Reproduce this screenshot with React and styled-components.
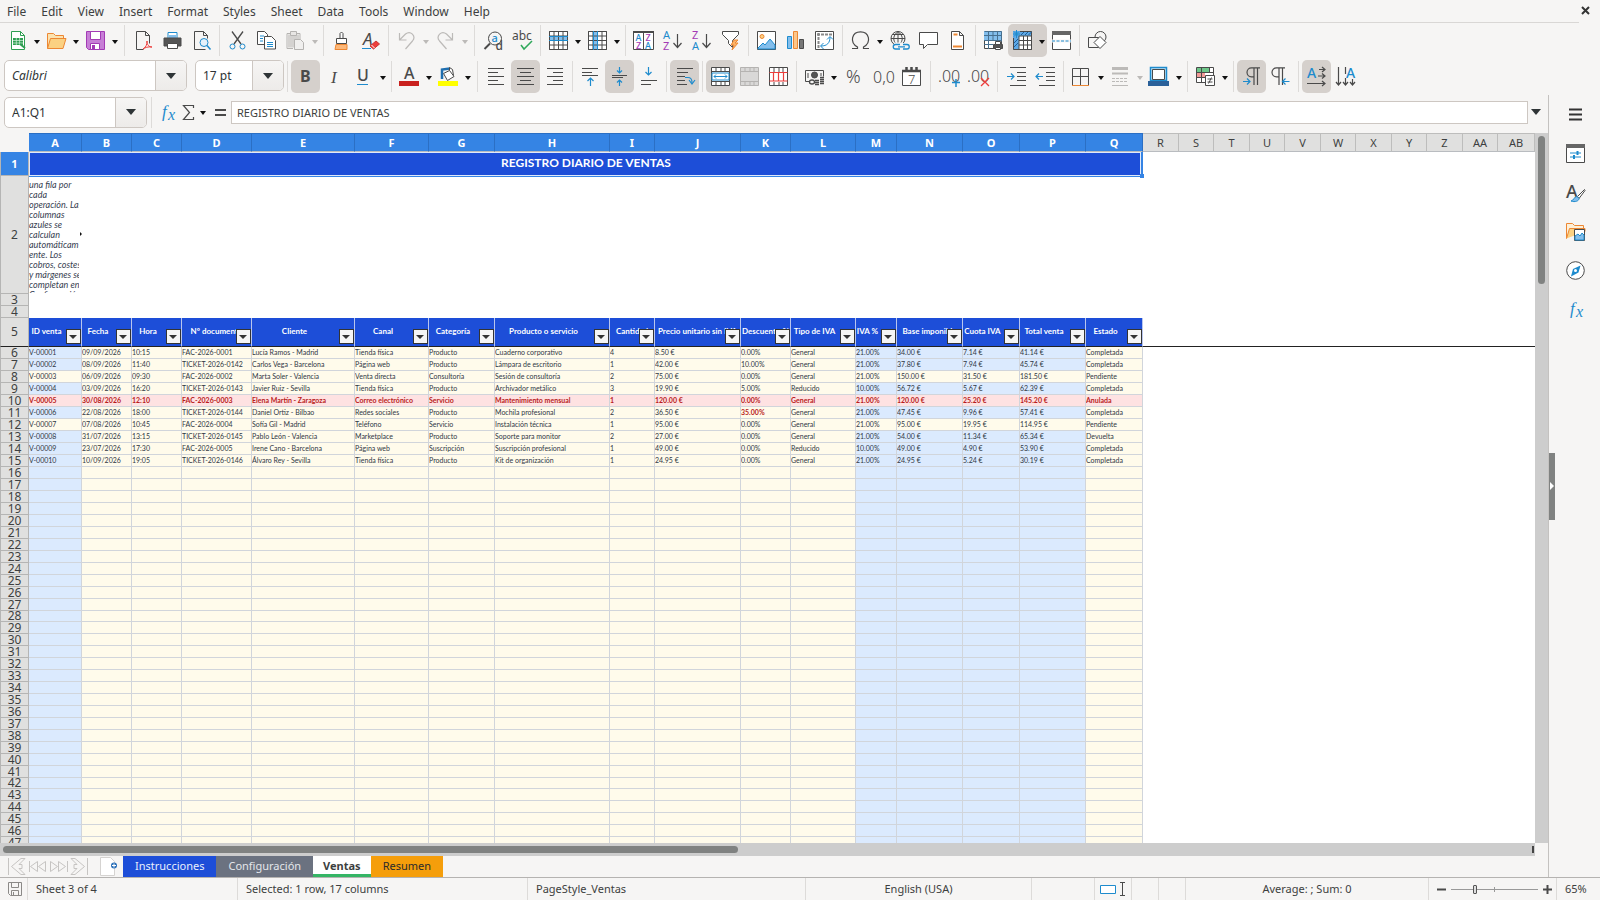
import React from 'react'
import styled, { createGlobalStyle, css } from 'styled-components'

const UI = '"Noto Sans", sans-serif'
const CELL = 'Lato, Carlito, sans-serif'
const INK = '#4a4a4a'
const BLUE = '#1e8bcd'
const SKY = '#83beec'
const ORANGE = '#ed8733'
const RED = '#ed3d3b'
const PURPLE = '#a33ab5'
const MUTED = '#bcbab8'

const GlobalStyle = createGlobalStyle`
    * { box-sizing: border-box; }
    body {
        margin: 0;
        background: #f6f5f4;
        color: #3d3f40;
        font-family: ${UI};
        font-size: 12px;
    }
    button, input, select {
        margin: 0;
        padding: 0;
        border: 0;
        border-radius: 0;
        background: none;
        color: inherit;
        font: inherit;
    }
    svg { overflow: visible; }
`

const Window = styled.div`
    display: flex;
    flex-direction: column;
    height: 100vh;
    overflow: hidden;
`

const MenuBar = styled.nav`
    display: flex;
    flex: none;
    height: 23px;
    align-items: center;
    justify-content: space-between;
    margin-right: 21px;
    border-bottom: 1px solid #d9d7d5;
`

const MenuItem = styled.button`
    height: 22px;
    padding: 0 8px 0 7px;
    line-height: 24px;
`

const CloseButton = styled.button`
    display: flex;
    flex: none;
    width: 12px;
    height: 12px;
    margin-right: -12px;
`

const Toolbar = styled.div`
    display: flex;
    flex: none;
    height: 36px;
    align-items: flex-start;
    padding: 1px 0 0 ${props => props.$indent}px;
`

const ToolButton = styled.button`
    display: flex;
    flex: none;
    height: 33px;
    align-items: center;
    border-radius: 5px;
    background: ${props => (props.$active ? '#d5d0cc' : 'transparent')};
`

const Glyph = styled.span`
    display: flex;
    width: 29px;
    justify-content: center;
`

const Caret = styled.span`
    width: 10px;
    display: flex;
    justify-content: center;
    padding-top: 2px;

    &::before {
        content: '';
        border: 3px solid transparent;
        border-top: 4px solid ${props => (props.$off ? MUTED : '#111')};
        border-bottom: 0;
    }
`

const Separator = styled.span`
    flex: none;
    width: 1px;
    height: 31px;
    margin: 1px ${props => (props.$wide ? 4 : 3)}px;
    background: #dddbd9;
`

const Combo = styled.span`
    display: grid;
    flex: none;
    width: ${props => props.$width}px;
    height: 31px;
    margin-right: ${props => props.$gap || 0}px;
    border: 1px solid #cdc7c2;
    border-radius: 5px;
    background: #fff;
    overflow: hidden;
`

const Select = styled.select`
    grid-area: 1 / 1;
    appearance: none;
    width: 100%;
    padding-left: 7px;
    font-style: ${props => (props.$italic ? 'italic' : 'normal')};
    color: #2e3436;
`

const ComboArrow = styled.span`
    grid-area: 1 / 1;
    justify-self: end;
    display: flex;
    width: 31px;
    align-items: center;
    justify-content: center;
    border-left: 1px solid #cdc7c2;
    background: linear-gradient(#f6f5f4, #edebe9);
    pointer-events: none;

    &::before {
        content: '';
        border: 5px solid transparent;
        border-top: 6px solid #2e3436;
        border-bottom: 0;
    }
`

const Body = styled.div`
    display: flex;
    flex: 1;
    min-height: 0;
`

const Main = styled.main`
    display: flex;
    flex: 1;
    min-width: 0;
    flex-direction: column;
`

const FormulaBar = styled.div`
    display: flex;
    flex: none;
    height: 38px;
    align-items: center;
    padding: 0 4px 4px;
`

const FormulaButton = styled.button`
    display: flex;
    flex: none;
    width: ${props => props.$width || 22}px;
    align-items: center;
    justify-content: center;
`

const FormulaInput = styled.input`
    flex: 1;
    min-width: 0;
    height: 23px;
    padding: 0 5px;
    border: 1px solid #cdc7c2;
    background: #fff;
    font-size: 11px;
`

const ExpandButton = styled.button`
    flex: none;
    width: 16px;
    padding-left: 3px;

    &::before {
        content: '';
        display: block;
        width: 0;
        border: 5px solid transparent;
        border-top: 6px solid #2e3436;
        border-bottom: 0;
    }
`

const GridArea = styled.div`
    display: flex;
    flex: 1;
    min-height: 0;
`

const GridView = styled.div`
    flex: 1;
    min-width: 0;
    overflow: hidden;
    background: #fff;
`

const Sheet = styled.table`
    width: 100%;
    min-width: 1534px;
    table-layout: fixed;
    border-collapse: separate;
    border-spacing: 0;
    font-family: ${CELL};
    font-size: 7px;
    line-height: 11px;

    th, td { padding: 0; }
`

const Corner = styled.td`
    background: #f6f5f4;
`

const ColumnHead = styled.th`
    height: 19px;
    border: solid ${props => (props.$selected ? '#2b6fc4' : '#bdbdbc')};
    border-width: 1px 1px 1px 0;
    border-bottom-color: #b9bcc0;
    background: ${props => (props.$selected ? '#3584e4' : '#e0e0df')};
    color: ${props => (props.$selected ? '#fff' : '#3d3f40')};
    font: ${props => (props.$selected ? 700 : 400)} 11px/17px ${UI};
`

const RowHead = styled.th`
    height: ${props => props.$height}px;
    border: solid #b5b5b4;
    border-width: 0 1px 1px;
    background: ${props => (props.$selected ? '#3584e4' : '#e0e0df')};
    color: ${props => (props.$selected ? '#fff' : '#3d3f40')};
    font: ${props => (props.$selected ? 700 : 400)} ${props => (props.$selected ? 11 : 12)}px/10px ${UI};
    ${props => props.$frozen && css`border-bottom-color: #222;`}
`

const TitleCell = styled.td`
    position: relative;
    padding-bottom: 3px !important;
    background: #1d4ed8;
    color: #fff;
    font-size: 12px;
    font-weight: 700;
    text-align: center;
`

const SelectionFrame = styled.span`
    position: absolute;
    inset: 0 0 -1px 0;
    border: solid #3584e4;
    border-width: 0 2px 1px 0;
    box-shadow: inset 0 0 0 1px #dfe9fb;

    &::after {
        content: '';
        position: absolute;
        right: -3px;
        bottom: -2px;
        width: 4px;
        height: 4px;
        background: #3584e4;
    }
`

const NoteCell = styled.td`
    position: relative;
    vertical-align: top;

    &::after {
        content: '';
        position: absolute;
        right: 0;
        top: 56px;
        border: 2px solid transparent;
        border-left: 2px solid #111;
        border-right: 0;
    }
`

const NoteText = styled.div`
    width: 50px;
    height: 117px;
    padding-top: 4px;
    overflow: hidden;
    color: #374151;
    font-size: 9px;
    font-style: italic;
    line-height: 10px;
    white-space: nowrap;
`

const FieldCell = styled.th`
    position: relative;
    padding: 0 ${props => (props.$full ? 0 : 17)}px 1px 0 !important;
    border-right: 1px solid #b9c6ee;
    border-bottom: 1px solid #222;
    background: #1d4ed8;
    color: #fff;
    font-size: 8px;
    font-weight: 700;
    white-space: nowrap;
`

const FieldName = styled.div`
    display: flex;
    justify-content: center;
    overflow: hidden;
`

const FilterButton = styled.button`
    position: absolute;
    right: 0;
    bottom: 2px;
    width: 15px;
    height: 15px;
    padding: 1px 2px 0;
    border: 1px solid #333;
    background: #f5f5f5;

    &::before {
        content: '';
        display: block;
        width: 0;
        border: 4px solid transparent;
        border-top: 4px solid #333;
        border-bottom: 0;
    }
`

const fills = { cream: '#fffbeb', blue: '#dbeafe', red: '#fee2e2' }

const Cell = styled.td`
    border: solid #d1d5db;
    border-width: 0 1px 1px 0;
    background: ${props => fills[props.$fill]};
    color: ${props => (props.$alert ? '#b91c1c' : '#2f3744')};
    font-weight: ${props => (props.$alert ? 700 : 400)};
    white-space: nowrap;
    overflow: hidden;
`

const FrozenEdge = styled.td`
    border-bottom: 1px solid #222;
`

const VScroll = styled.div`
    flex: none;
    width: 13px;
    padding: 3px;
    background: #cdcdcd;
`

const VThumb = styled.div`
    width: 7px;
    height: 21%;
    border-radius: 4px;
    background: #808281;
`

const HScroll = styled.div`
    display: flex;
    flex: none;
    justify-content: space-between;
    height: 13px;
    margin-right: 13px;
    padding: 3px 1px 3px 3px;
    background: #cdcdcd;
`

const HThumb = styled.div`
    width: 48%;
    border-radius: 4px;
    background: #808281;
`

const SplitMark = styled.div`
    width: 2px;
    background: #444;
`

const TabBar = styled.div`
    display: flex;
    flex: none;
    height: 21px;
    padding-left: 7px;
`

const TabNav = styled.button`
    display: flex;
    width: 21px;
`

const AddTab = styled.button`
    display: flex;
    width: 20px;
    margin: 0 4px 0 8px;
`

const tabKinds = {
    blue: css`background: #1d4ed8; color: #e8eefc;`,
    gray: css`background: #6b7280; color: #e4e6ea;`,
    open: css`background: #fff; box-shadow: inset 0 -3px #35b565; font-weight: 700;`,
    amber: css`background: #f59e0b; color: #2b2b2b;`,
}

const Tab = styled.button`
    padding: 0 ${props => (props.$kind === 'open' ? 10 : 12)}px 2px;
    font-size: 11px;
    ${props => tabKinds[props.$kind]}
`

const Rail = styled.aside`
    display: flex;
    flex: none;
    width: 52px;
    border-left: 1px solid #c4c2c0;
    padding-right: 4px;
`

const RailHandle = styled.button`
    display: flex;
    width: 6px;
    height: 67px;
    align-self: center;
    align-items: center;
    background: #808281;

    &::before {
        content: '';
        margin-left: 1px;
        border: 4px solid transparent;
        border-left: 4px solid #fff;
        border-right: 0;
    }
`

const RailButtons = styled.div`
    display: flex;
    flex: 1;
    flex-direction: column;
`

const RailButton = styled.button`
    display: flex;
    height: 39px;
    align-items: center;
    justify-content: center;
`

const StatusBar = styled.footer`
    display: flex;
    flex: none;
    height: 23px;
    border-top: 1px solid #b5b3b1;
    font-size: 11px;
    line-height: 22px;
`

const StatusItem = styled.div`
    display: flex;
    flex: ${props => (props.$grow ? `${props.$grow} 1 0` : 'none')};
    width: ${props => (props.$width ? `${props.$width}px` : 'auto')};
    align-items: center;
    justify-content: ${props => (props.$center ? 'center' : 'flex-start')};
    gap: 5px;
    padding-left: ${props => (props.$center ? 0 : 8)}px;
    white-space: nowrap;

    & + & {
        border-left: 1px solid #dddbd9;
    }
`

const ZoomButton = styled.button`
    display: flex;
    width: 9px;
`

const ZoomSlider = styled.input`
    appearance: none;
    width: 87px;
    height: 11px;
    background:
        linear-gradient(#999, #999) 43px 3px / 1px 5px no-repeat,
        linear-gradient(#999, #999) 0 5px / 100% 1px no-repeat;

    &::-webkit-slider-thumb {
        appearance: none;
        width: 4px;
        height: 9px;
        border: 1px solid #555;
        border-radius: 1px;
        background: #ddd;
    }
`

const Svg = ({ size = 19, w, h, children }) => (
    <svg
        width={w || size}
        height={h || size}
        viewBox={`0 0 ${w || size} ${h || size}`}
        fill="none"
        stroke={INK}
        strokeWidth="1"
        aria-hidden="true"
    >
        {children}
    </svg>
)

const Letter = ({ x, y, s = 12, c = INK, w = 400, i, f = UI, children }) => (
    <text x={x} y={y} fontSize={s} fill={c} stroke="none" fontWeight={w} fontStyle={i ? 'italic' : 'normal'} fontFamily={f}>
        {children}
    </text>
)

const grid = 'M.5.5h18v18H.5zM.5 5h18M.5 9.5h18M.5 14h18M5 .5v18M9.5.5v18M14 .5v18'

const icons = {
    new: (
        <>
            <path d="M3.5.5h9l4 4v14h-13z" fill="#fff" stroke="#2f9e52" />
            <path d="M12.5.5v4h4" stroke="#2f9e52" />
            <path d="M5 7h10v7H5z" fill="#2f9e52" stroke="none" />
            <path d="M5 9.5h10M5 12h10M8.3 7v7M11.6 7v7" stroke="#d5f0dc" strokeWidth=".7" />
            <path d="M12 13l5 4" stroke="#2f9e52" strokeWidth="2" />
        </>
    ),
    open: (
        <>
            <path d="M.5 17.5v-15h6l2 2h8v3" fill="#fbe3b0" stroke={ORANGE} />
            <path d="M.5 17.5l3-10h15.500l-3 10z" fill="#fbd182" stroke={ORANGE} />
        </>
    ),
    save: (
        <>
            <path d="M.5.5h18v18h-16l-2-2z" fill="#c77fd6" stroke={PURPLE} />
            <path d="M4.500.500h10v8h-10z" fill="#fff" stroke={PURPLE} />
            <path d="M4.500 12.500h9v6h-9z" fill="#fff" stroke={PURPLE} />
            <path d="M6 14h3v4H6z" fill={PURPLE} stroke="none" />
        </>
    ),
    pdf: (
        <>
            <path d="M2.500 18.500V.500h9l4 4v8M2.500 18.500h7M11.500.500v4h4" />
            <path d="M9 18c3-2 4-4 4-8 0 4 2 6 5 6-4-.5-7 .5-9 2z" stroke={RED} />
        </>
    ),
    print: (
        <>
            <path d="M5 8V1.500h9V8" fill="#fff" stroke={BLUE} />
            <path d="M6 7h7V4H6z" fill={SKY} stroke="none" />
            <path d="M1 7h17v8H1z" fill="#555" />
            <path d="M4.500 12.500h10v5h-10z" fill="#fff" />
        </>
    ),
    preview: (
        <>
            <path d="M2.500 18.500V.500h9l4 4v3M2.500 18.500h11M11.500.500v4h4" />
            <circle cx="12" cy="11.500" r="4" fill="#e6f2fb" stroke={BLUE} />
            <path d="M15 14.500l3.500 4" stroke={BLUE} strokeWidth="1.500" />
        </>
    ),
    cut: (
        <>
            <path d="M4 .500L13 13M15 .500L6 13" strokeWidth="1.300" />
            <circle cx="4.500" cy="15.500" r="2.500" stroke={BLUE} />
            <circle cx="14.500" cy="15.500" r="2.500" stroke={BLUE} />
        </>
    ),
    copy: (
        <>
            <path d="M.500.500h7l3 3v10H.500z" fill="#fff" />
            <path d="M7.500 5.500h7l4 4v8.500h-11z" fill="#fff" />
            <path d="M3 5h4M3 7.500h3M3 10h3M10 11.500h6M10 13.500h6M10 15.500h6" stroke={BLUE} />
        </>
    ),
    paste: (
        <>
            <path d="M1 2.500h13v6M1 2.500v15h6" stroke="#b5b3b1" />
            <path d="M2 3.500h11v13H2z" fill="#d4d2d0" stroke="none" />
            <path d="M4.500.500h6v4h-6z" fill="#e8e6e4" stroke="#b5b3b1" />
            <path d="M8.500 8.500h6l3 3v7h-9z" fill="#f0efee" stroke="#b5b3b1" />
        </>
    ),
    clone: (
        <>
            <path d="M8 7V2.500q1.500-3 3 0V7" fill="#fff" />
            <path d="M4.500 7.500h10v5h-10z" fill="#fff" />
            <path d="M4 13.500h11v5H3z" fill="#fcb87a" stroke={ORANGE} />
        </>
    ),
    clear: (
        <>
            <Letter x="2" y="14" s={17} i>A</Letter>
            <path d="M1 17.500h9" stroke={BLUE} />
            <path d="M9 15l6-5 3.500 3-6 5z" fill={RED} stroke="#c33" />
            <path d="M10.500 14l3 3" stroke="#fff" />
        </>
    ),
    undo: <path d="M2.500 2v7h7M2.500 9l6-6c5-4 11 2 7 7l-7 8" stroke={MUTED} strokeWidth="1.200" />,
    redo: <path d="M16.500 2v7h-7M16.500 9l-6-6c-5-4-11 2-7 7l7 8" stroke={MUTED} strokeWidth="1.200" />,
    find: (
        <>
            <circle cx="11" cy="7.500" r="6.500" />
            <path d="M6 12.500L.500 18" strokeWidth="2" />
            <Letter x="7.500" y="11" s={11} c={BLUE} w={500}>a</Letter>
            <Letter x="11.500" y="19" s={12} w={500}>d</Letter>
        </>
    ),
    spell: (
        <>
            <Letter x="-1" y="9" s={12}>abc</Letter>
            <path d="M8 14l3 4 8-8" stroke="#2fa85a" strokeWidth="1.500" />
        </>
    ),
    row: (
        <>
            <path d="M.500.500h18v18H.500z" fill="#fff" />
            <path d="M0 5h19v5H0z" fill={SKY} stroke="none" />
            <path d={grid} />
            <path d="M0 5.500h19M0 9.500h19" stroke={BLUE} />
        </>
    ),
    col: (
        <>
            <path d="M.500.500h18v18H.500z" fill="#fff" />
            <path d="M5 0h5v19H5z" fill={SKY} stroke="none" />
            <path d={grid} />
            <path d="M5.500 0v19M9.500 0v19" stroke={BLUE} />
        </>
    ),
    sort: (
        <>
            <path d="M-.500.500h20v18h-20zM9.500 2v16" fill="#fff" />
            <path d="M-1 1h21" strokeWidth="2" />
            <Letter x="1.500" y="10" s={9} c={BLUE} w={500}>A</Letter>
            <Letter x="2" y="18" s={9} c={PURPLE} w={500}>Z</Letter>
            <Letter x="11.500" y="10" s={9} c={PURPLE} w={500}>Z</Letter>
            <Letter x="11" y="18" s={9} c={BLUE} w={500}>A</Letter>
        </>
    ),
    az: (
        <>
            <Letter x="0" y="8" s={11} c={BLUE}>A</Letter>
            <Letter x="0" y="19" s={11} c={PURPLE}>Z</Letter>
            <path d="M14.500 3v13M10.500 12l4 4.500 4-4.500" strokeWidth="1.200" />
        </>
    ),
    za: (
        <>
            <Letter x="0" y="8" s={11} c={PURPLE}>Z</Letter>
            <Letter x="0" y="19" s={11} c={BLUE}>A</Letter>
            <path d="M14.500 3v13M10.500 12l4 4.500 4-4.500" strokeWidth="1.200" />
        </>
    ),
    filter: (
        <>
            <path d="M1.500.500h16v3l-6 6v7l-4-4v-3l-6-6z" fill="#fff" />
            <path d="M13 9l-3 5h3l-2 5 6-7h-3l3-3z" fill="#fcb468" stroke={ORANGE} />
        </>
    ),
    image: (
        <>
            <path d="M.500.500h18v18H.500z" fill="#fff" />
            <circle cx="5" cy="5.500" r="2" fill="#fcd182" stroke={ORANGE} />
            <path d="M1 17l5-5 2 2 5-6 5 6v4H1z" fill={SKY} stroke={BLUE} />
        </>
    ),
    chart: (
        <>
            <path d="M1.500 5.500h4v12h-4z" fill={SKY} stroke={BLUE} />
            <path d="M7.500.500h4v17h-4z" fill="#fcc68a" stroke={ORANGE} />
            <path d="M13.500 8.500h4v9h-4z" fill="#777" />
        </>
    ),
    pivot: (
        <>
            <path d="M.500.500h18v18H.500z" fill="#fff" />
            <path d="M2 3.500h15M3.500 2v15" strokeWidth="2" stroke="#888" strokeDasharray="3 1" />
            <path d="M6 15c6 0 9-3 9-9M12 8.500l3-3 3 3M8.500 12l-3 3 3 3" stroke={BLUE} />
        </>
    ),
    omega: <path d="M1 17.500h5.500v-1.500C-2 11 1 .800 9.500.800S21 11 12.500 16v1.500H18" strokeWidth="1.200" />,
    link: (
        <>
            <circle cx="8" cy="7.500" r="7" />
            <path d="M1 7.500h14M2.500 3.500h11M8 .500v11M8 .500c-5 4-5 8-3 11M8 .500c5 4 5 8 3 11" />
            <path d="M4 12h16v7H4z" fill="#f6f5f4" stroke="none" />
            <path d="M10 13.500H5.500a2 2 0 000 4.500H10M13 13.500h4a2 2 0 010 4.500h-4M8 15.800h7" stroke={BLUE} strokeWidth="1.300" />
        </>
    ),
    comment: <path d="M.500 1.500h18v12h-10l-4 4v-4h-4z" fill="#fff" />,
    header: (
        <>
            <path d="M3.500.500h8l4 4v14h-12zM11.500.500v4h4" fill="#fff" />
            <path d="M5.500 3.500h4M5 15.500h9" stroke={ORANGE} strokeWidth="2" />
        </>
    ),
    printArea: (
        <>
            <path d="M.500.500h17v17H.500z" fill="#fff" />
            <path d="M0 0h18v9H0z" fill={SKY} stroke="none" />
            <path d="M0 4.500h18M0 9.500h18M0 13.500h9M4.500 0v18M9 0v10M13.500 0v10M.500.500h17v10" stroke="#48708f" />
            <path d="M9.500 13.500h9v4h-9z" fill="#555" />
            <path d="M11.500 10.500h5v3h-5zM11.500 16.500h5v2h-5z" fill="#fff" />
        </>
    ),
    freeze: (
        <>
            <path d="M.500.500h18v18H.500z" fill="#fff" />
            <path d="M0 0h19v5H0zM0 0h6v19H0z" fill="#5fa9e6" stroke="none" />
            <path d="M.500 7v11.500h18V.500H7M6 5v13.500M6 5h12.500M6 9.500h12.500M6 14h12.500M10.500 5v13.500M14.500 5v13.500" />
            <path d="M8 4l3-3M12 4l3-3M15.500 4l3-3M1 12l4-4M1 16l4-4" stroke="#1f5f98" />
            <path d="M3.500-1v8M0 3h7M1 .500l5 5M6 .500l-5 5" stroke={BLUE} />
        </>
    ),
    split: (
        <>
            <path d="M.500.500h18v18H.500z" fill="#fff" />
            <path d="M0 0h19v4H0z" fill="#666" stroke="none" />
            <path d="M0 10h19" stroke="#f6f5f4" strokeWidth="3" />
            <path d="M0 10h19" stroke={BLUE} strokeDasharray="3 1.500" />
        </>
    ),
    shapes: (
        <>
            <circle cx="12.500" cy="6" r="5.500" />
            <path d="M.500 6.500h10v10H.500z" fill="#f6f5f4" />
            <path d="M12 5.500l6 6-6 6-6-6z" fill="#fff" />
        </>
    ),
    bold: <Letter x="4" y="15" s={16} w={700}>B</Letter>,
    italic: <Letter x="6" y="16" s={17} i f='"Liberation Serif", serif'>I</Letter>,
    underline: (
        <>
            <Letter x="3" y="14" s={16} w={500}>U</Letter>
            <path d="M3 17.500h11" stroke={BLUE} />
        </>
    ),
    fontColor: (
        <>
            <Letter x="4" y="12" s={16} w={500}>A</Letter>
            <path d="M-1 16.500h20" stroke="#c9211e" strokeWidth="5" />
        </>
    ),
    fill: (
        <>
            <path d="M3 12V2.500l8-1" stroke="#1f6fb0" strokeWidth="2.500" />
            <path d="M4.500 6.500l6-3 4.500 6-6.500 4zM10.500 3.500v-3l3 2 1 6" fill="#fff" />
            <path d="M-1 16.500h20" stroke="#ff0" strokeWidth="5" />
        </>
    ),
    left: <path d="M1 1.500h16M1 5.500h10M1 9.500h16M1 13.500h10M1 17.500h16" strokeWidth="1.200" />,
    center: <path d="M1 1.500h17M4 5.500h11M1 9.500h17M4 13.500h11M1 17.500h17" strokeWidth="1.200" />,
    right: <path d="M2 1.500h16M8 5.500h10M2 9.500h16M8 13.500h10M2 17.500h16" strokeWidth="1.200" />,
    top: (
        <>
            <path d="M1 1.500h16M1 5.500h10M1 8.500h16" />
            <path d="M9.500 19v-8M6.500 14l3-3 3 3" stroke={BLUE} strokeWidth="1.200" />
        </>
    ),
    middle: (
        <>
            <path d="M2 8.500h15M2 10.500h11" />
            <path d="M9.500 0v6M7 3.500l2.500 2.500L12 3.500M9.500 19v-6M7 15.500l2.500-2.500 2.500 2.500" stroke={BLUE} strokeWidth="1.200" />
        </>
    ),
    bottom: (
        <>
            <path d="M2 13.500h16M2 17.500h10" />
            <path d="M9.500 0v8M6.500 5l3 3 3-3" stroke={BLUE} strokeWidth="1.200" />
        </>
    ),
    wrap: (
        <>
            <path d="M2 1.500h16M2 5.500h11M2 9.500h8M2 13.500h8M2 17.500h10" />
            <path d="M10 10.500h3q4 0 4 5M14 13l3 4 3-4" stroke={BLUE} strokeWidth="1.200" />
        </>
    ),
    merge: (
        <>
            <path d="M.500.500h18v18H.500z" fill="#fff" />
            <path d="M0 4.500h19M0 14.500h19M5 0v5M10 0v5M14 0v5M5 15v4M10 15v4M14 15v4" />
            <path d="M1 6h17v7H1z" fill="#fff" stroke={BLUE} />
            <path d="M3 9.500h13M5 7.500l-2 2 2 2M14 7.500l2 2-2 2" stroke={BLUE} />
        </>
    ),
    mergeOff: (
        <>
            <path d="M.500.500h18v18H.500z" fill="#d9d8d7" stroke="#b5b3b1" />
            <path d="M0 4.500h19M0 14.500h19M5 0v5M10 0v5M14 0v5M5 15v4M10 15v4M14 15v4" stroke="#b5b3b1" />
        </>
    ),
    unmerge: (
        <>
            <path d="M.500.500h18v18H.500z" fill="#fff" />
            <path d="M5 0v5M10 0v5M14 0v5M5 15v4M10 15v4M14 15v4M.500 4v11M18.500 4v11" />
            <path d="M.500 5.500h18M.500 14h18M4.500 6v8M9.500 6v8M14.500 6v8" stroke={RED} strokeWidth="1.200" />
        </>
    ),
    currency: (
        <>
            <path d="M5 14.500H.500v-11h18v6" />
            <circle cx="9.500" cy="8" r="3" fill="#555" />
            <path d="M3 6v5M16 6v3" />
            <path d="M4.500 15a2.500 2 0 015 0 2.500 2 0 01-5 0zM10 13.500h4M10 15.500h4M10 17.500h4M15 10.500h4M15 12.500h4M15 14.500h4M15 16.500h4" strokeWidth="1.300" />
        </>
    ),
    percent: <Letter x="2" y="16" s={18} w={300}>%</Letter>,
    number: <Letter x="0" y="16" s={16} w={300}>0,0</Letter>,
    date: (
        <>
            <path d="M.500 3.500h18v15H.500z" fill="#fff" />
            <path d="M0 4h19M4.500 0v5M9.500 0v5M14.500 0v5" strokeWidth="2.500" />
            <Letter x="6" y="17" s={13} w={300}>7</Letter>
        </>
    ),
    addDec: (
        <>
            <Letter x="-2" y="15" s={16} w={300}>.00</Letter>
            <path d="M16 12v8M12 15.500h8" stroke={BLUE} strokeWidth="1.500" />
        </>
    ),
    delDec: (
        <>
            <Letter x="-2" y="15" s={16} w={300}>.00</Letter>
            <path d="M12 11l8 8M20 11l-8 8" stroke={RED} strokeWidth="1.300" />
        </>
    ),
    indent: (
        <>
            <path d="M3 .500h16M10 5.500h9M10 9.500h9M10 13.500h9M3 18.500h16" />
            <path d="M0 9.500h7M4 6.500l3 3-3 3" stroke={BLUE} strokeWidth="1.200" />
        </>
    ),
    outdent: (
        <>
            <path d="M3 .500h16M10 5.500h9M10 9.500h9M10 13.500h9M3 18.500h16" />
            <path d="M0 9.500h7M3 6.500l-3 3 3 3" stroke={BLUE} strokeWidth="1.200" />
        </>
    ),
    borders: (
        <>
            <path d="M.500 18V1.500h16V18M8.500 2v16M1 9.500h15" />
            <path d="M0 18.500h17" stroke={ORANGE} />
        </>
    ),
    lineStyle: (
        <>
            <path d="M1 1.500h16" stroke={MUTED} strokeWidth="3" />
            <path d="M1 6.500h16" stroke={MUTED} strokeWidth="2" />
            <path d="M1 11.500h16M1 14.500h16" stroke={MUTED} strokeDasharray="3 1" />
            <path d="M1 18.500h16" stroke={MUTED} />
        </>
    ),
    lineColor: (
        <>
            <path d="M.500.500h16v13h-16z" fill="#bfe0f5" stroke={BLUE} strokeWidth="1.500" />
            <path d="M2.500 2.500h12v10h-12z" fill="#fff" />
            <path d="M-2 16.500h21" stroke="#2a6099" strokeWidth="5" />
        </>
    ),
    conditional: (
        <>
            <path d="M.500.500h17v15H.500z" fill="#fff" />
            <path d="M1 1h12v4H1z" fill="#6dc789" stroke="none" />
            <path d="M1 5h8v6H1z" fill="#f29b98" stroke="none" />
            <path d="M0 5.500h17M0 10.500h9M5.500 0v15M13.500 0v6" />
            <path d="M9.500 8.500h9v10h-9z" fill="#fff" />
            <path d="M11.500 12h5M11.500 15h5M15.500 10.500l-3 6" />
        </>
    ),
    ltr: (
        <>
            <path d="M18 .800H9.500a4.500 4.500 0 000 9H12M12 .800V18M15.500.800V18" strokeWidth="1.200" />
            <path d="M1 14.500h7M5 11.500l3 3-3 3" stroke={BLUE} strokeWidth="1.200" />
        </>
    ),
    rtl: (
        <>
            <path d="M14 .800H5.500a4.500 4.500 0 000 9H8M8 .800V18M11.500.800V18" strokeWidth="1.200" />
            <path d="M18.500 14.500h-7M14.500 11.500l-3 3 3 3" stroke={BLUE} strokeWidth="1.200" />
        </>
    ),
    horizontal: (
        <>
            <Letter x="0" y="11" s={14} c={BLUE} w={500}>A</Letter>
            <path d="M12 2.500h6M15 0l3 2.500L15 5M11 9h7M15 6.500L18 9l-3 2.500M0 16.500h18M15 14l3 2.500-3 2.500" strokeWidth="1.200" />
        </>
    ),
    vertical: (
        <>
            <Letter x="10" y="11" s={14} c={BLUE} w={500}>A</Letter>
            <path d="M2.500 0v18M0 15l2.500 3L5 15M9.500 0v7M9.500 11v7M7 15l2.500 3 2.500-3M16.500 12v6M14 15l2.500 3 2.500-3" strokeWidth="1.200" />
        </>
    ),
    fx: (
        <>
            <Letter x="4" y="14" s={17} i c={BLUE} f='"Liberation Serif", serif'>f</Letter>
            <Letter x="10" y="17" s={16} i c={BLUE} f='"Liberation Serif", serif'>x</Letter>
        </>
    ),
    sum: <path d="M14.500 5V2.500h-10l6 7-6 7h10V14" strokeWidth="1.200" />,
    equals: <path d="M4 7h11M4 12h11" strokeWidth="2" />,
    menu: <path d="M3 4.500h13M3 9.500h13M3 14.500h13" stroke="#333" strokeWidth="2" />,
    properties: (
        <>
            <path d="M.500.500h18v18H.500z" fill="#fff" />
            <path d="M0 0h19v4H0z" fill="#666" stroke="none" />
            <path d="M4 9h11M4 13h11" stroke={BLUE} />
            <path d="M11.500 7v4M8 11v4" stroke={BLUE} strokeWidth="2" />
        </>
    ),
    styles: (
        <>
            <Letter x="0" y="15" s={18} w={500}>A</Letter>
            <path d="M18.500 6.500l-7 7 1.500 2 6-8z" fill="#fff" />
            <path d="M11 13.500c-3 0-3 4-6 4.500 4 1.500 8 0 8-2.500z" fill={SKY} stroke={BLUE} />
        </>
    ),
    gallery: (
        <>
            <path d="M.500 16.500V1.500h6l2 2h9v3" fill="#fdf0d8" stroke={ORANGE} />
            <path d="M.500 16.500l3-10h15.500v3" fill="#fbd182" stroke={ORANGE} />
            <path d="M8.500 7.500h10v11h-10z" fill="#fff" />
            <path d="M9 18v-4l3-2 2 2 2-3 2 2v5z" fill={SKY} stroke={BLUE} />
        </>
    ),
    navigator: (
        <>
            <circle cx="9.500" cy="9.500" r="8.800" fill="#fff" />
            <path d="M14.500 4.500l-2 7-7.500 4 2-7.500z" fill={BLUE} stroke="none" />
            <circle cx="9.500" cy="9.500" r="1.500" fill="#fff" stroke="none" />
        </>
    ),
}

const Tool = ({ name, caret, active, off }) => (
    <ToolButton type="button" aria-label={name} $active={active}>
        <Glyph><Svg>{icons[name]}</Svg></Glyph>
        {caret && <Caret $off={off} />}
    </ToolButton>
)

// "|" is a separator, "||" a wide one, "+" marks a drop-down, "*" a pressed button, "-" a greyed arrow
const renderTools = list => list.split(' ').map((item, i) => {
    if (item[0] === '|') return <Separator key={i} $wide={item === '||'} />
    const name = item.replace(/[^a-zA-Z]/g, '')
    return <Tool key={i} name={name} caret={item.includes('+')} active={item.includes('*')} off={item.includes('-')} />
})

const standardTools = 'new+ open+ save+ || pdf print preview | cut copy paste+- | clone clear | undo+- redo+- || find spell | row+ col+ | sort az za filter | image chart pivot | omega+ link comment header | printArea freeze+* split | shapes'
const formatTools = 'bold* italic underline+ | fontColor+ fill+ || left center* right | top middle* bottom | wrap* | merge* mergeOff unmerge | currency+ percent number date || addDec delDec || indent outdent | borders+ lineStyle+- lineColor+ | conditional+ | ltr* rtl | horizontal* vertical'

const menus = ['File', 'Edit', 'View', 'Insert', 'Format', 'Styles', 'Sheet', 'Data', 'Tools', 'Window', 'Help']

const columns = [
    ['A', 53, 'ID venta'],
    ['B', 50, 'Fecha'],
    ['C', 50, 'Hora'],
    ['D', 70, 'Nº documento', true],
    ['E', 103, 'Cliente'],
    ['F', 74, 'Canal'],
    ['G', 66, 'Categoría'],
    ['H', 115, 'Producto o servicio'],
    ['I', 45, 'Cantidad', true],
    ['J', 86, 'Precio unitario sin IVA', true],
    ['K', 50, 'Descuento %', true],
    ['L', 65, 'Tipo de IVA'],
    ['M', 41, 'IVA %'],
    ['N', 66, 'Base imponible', true],
    ['O', 57, 'Cuota IVA'],
    ['P', 66, 'Total venta'],
    ['Q', 57, 'Estado'],
]

const emptyColumns = [
    ['R', 36], ['S', 35], ['T', 36], ['U', 35], ['V', 36], ['W', 35],
    ['X', 36], ['Y', 35], ['Z', 36], ['AA', 35], ['AB'],
]

const sales = [
    ['V-00001', '09/09/2026', '10:15', 'FAC-2026-0001', 'Lucía Ramos - Madrid', 'Tienda física', 'Producto', 'Cuaderno corporativo', '4', '8.50 €', '0.00%', 'General', '21.00%', '34.00 €', '7.14 €', '41.14 €', 'Completada'],
    ['V-00002', '08/09/2026', '11:40', 'TICKET-2026-0142', 'Carlos Vega - Barcelona', 'Página web', 'Producto', 'Lámpara de escritorio', '1', '42.00 €', '10.00%', 'General', '21.00%', '37.80 €', '7.94 €', '45.74 €', 'Completada'],
    ['V-00003', '06/09/2026', '09:30', 'FAC-2026-0002', 'Marta Soler - Valencia', 'Venta directa', 'Consultoría', 'Sesión de consultoría', '2', '75.00 €', '0.00%', 'General', '21.00%', '150.00 €', '31.50 €', '181.50 €', 'Pendiente'],
    ['V-00004', '03/09/2026', '16:20', 'TICKET-2026-0143', 'Javier Ruiz - Sevilla', 'Tienda física', 'Producto', 'Archivador metálico', '3', '19.90 €', '5.00%', 'Reducido', '10.00%', '56.72 €', '5.67 €', '62.39 €', 'Completada'],
    ['V-00005', '30/08/2026', '12:10', 'FAC-2026-0003', 'Elena Martín - Zaragoza', 'Correo electrónico', 'Servicio', 'Mantenimiento mensual', '1', '120.00 €', '0.00%', 'General', '21.00%', '120.00 €', '25.20 €', '145.20 €', 'Anulada'],
    ['V-00006', '22/08/2026', '18:00', 'TICKET-2026-0144', 'Daniel Ortiz - Bilbao', 'Redes sociales', 'Producto', 'Mochila profesional', '2', '36.50 €', '35.00%', 'General', '21.00%', '47.45 €', '9.96 €', '57.41 €', 'Completada'],
    ['V-00007', '07/08/2026', '10:45', 'FAC-2026-0004', 'Sofía Gil - Madrid', 'Teléfono', 'Servicio', 'Instalación técnica', '1', '95.00 €', '0.00%', 'General', '21.00%', '95.00 €', '19.95 €', '114.95 €', 'Pendiente'],
    ['V-00008', '31/07/2026', '13:15', 'TICKET-2026-0145', 'Pablo León - Valencia', 'Marketplace', 'Producto', 'Soporte para monitor', '2', '27.00 €', '0.00%', 'General', '21.00%', '54.00 €', '11.34 €', '65.34 €', 'Devuelta'],
    ['V-00009', '23/07/2026', '17:30', 'FAC-2026-0005', 'Irene Cano - Barcelona', 'Página web', 'Suscripción', 'Suscripción profesional', '1', '49.00 €', '0.00%', 'Reducido', '10.00%', '49.00 €', '4.90 €', '53.90 €', 'Completada'],
    ['V-00010', '10/09/2026', '19:05', 'TICKET-2026-0146', 'Álvaro Rey - Sevilla', 'Tienda física', 'Producto', 'Kit de organización', '1', '24.95 €', '0.00%', 'General', '21.00%', '24.95 €', '5.24 €', '30.19 €', 'Completada'],
]

const FIRST_ROW = 6
const LAST_ROW = 47
const rowNumbers = Array.from({ length: LAST_ROW - FIRST_ROW + 1 }, (_, i) => i + FIRST_ROW)
const noteLines = ['una fila por', 'cada', 'operación. Las', 'columnas', 'azules se', 'calculan', 'automáticam', 'ente. Los', 'cobros, costes', 'y márgenes se', 'completan en', 'Configuración']

const isComputed = c => c === 0 || (c >= 12 && c <= 15)

const fillOf = (sale, c) => {
    const status = sale && sale[16]
    if (status === 'Anulada') return 'red'
    if (status === 'Pendiente') return 'cream'
    return isComputed(c) ? 'blue' : 'cream'
}

const DataRow = ({ number }) => {
    const sale = sales[number - FIRST_ROW]
    return (
        <tr>
            <RowHead scope="row" $height={number % 14 === 0 ? 11 : 12}>{number}</RowHead>
            {columns.map(([letter], c) => (
                <Cell
                    key={letter}
                    $fill={fillOf(sale, c)}
                    $alert={sale && (sale[16] === 'Anulada' || sale[c] === '35.00%')}
                >
                    {sale && sale[c]}
                </Cell>
            ))}
            <td colSpan={11} />
        </tr>
    )
}

const SalesSheet = () => (
    <Sheet>
        <colgroup>
            <col style={{ width: 29 }} />
            {[...columns, ...emptyColumns].map(([letter, width]) => <col key={letter} style={{ width }} />)}
        </colgroup>
        <thead>
            <tr>
                <Corner />
                {columns.map(([letter]) => <ColumnHead key={letter} scope="col" $selected>{letter}</ColumnHead>)}
                {emptyColumns.map(([letter]) => <ColumnHead key={letter} scope="col">{letter}</ColumnHead>)}
            </tr>
        </thead>
        <tbody>
            <tr>
                <RowHead scope="row" $height={24} $selected>1</RowHead>
                <TitleCell colSpan={17}>
                    REGISTRO DIARIO DE VENTAS
                    <SelectionFrame />
                </TitleCell>
                <td colSpan={11} />
            </tr>
            <tr>
                <RowHead scope="row" $height={118}>2</RowHead>
                <NoteCell>
                    <NoteText>{noteLines.map(line => <div key={line}>{line}</div>)}</NoteText>
                </NoteCell>
                <td colSpan={27} />
            </tr>
            <tr>
                <RowHead scope="row" $height={12}>3</RowHead>
                <td colSpan={28} />
            </tr>
            <tr>
                <RowHead scope="row" $height={12}>4</RowHead>
                <td colSpan={28} />
            </tr>
            <tr>
                <RowHead scope="row" $height={29} $frozen>5</RowHead>
                {columns.map(([letter, , name, full]) => (
                    <FieldCell key={letter} $full={full}>
                        <FieldName>{name}</FieldName>
                        <FilterButton type="button" aria-label={`Filter ${name}`} />
                    </FieldCell>
                ))}
                <FrozenEdge colSpan={11} />
            </tr>
            {rowNumbers.map(number => <DataRow key={number} number={number} />)}
        </tbody>
    </Sheet>
)

const SheetTabs = () => (
    <TabBar>
        <TabNav type="button" aria-label="First sheet">
            <Svg w={20} h={21}><path d="M1.500 2v17M4.500 10.500L14 2.500h4l-6 6h3v4h-3l6 6h-4z" stroke="#c6c4c2" /></Svg>
        </TabNav>
        <TabNav type="button" aria-label="Previous sheet">
            <Svg w={20} h={21}><path d="M1.500 5v11M9.500 5.500l-7 5 7 5zM17.500 5.500l-7 5 7 5z" stroke="#c6c4c2" /></Svg>
        </TabNav>
        <TabNav type="button" aria-label="Next sheet">
            <Svg w={20} h={21}><path d="M18.500 5v11M1.500 5.500l7 5-7 5zM9.500 5.500l7 5-7 5z" stroke="#c6c4c2" /></Svg>
        </TabNav>
        <TabNav type="button" aria-label="Last sheet">
            <Svg w={20} h={21}><path d="M17.500 2v17M14.500 10.500L5 2.500H1l6 6H4v4h3l-6 6h4z" stroke="#c6c4c2" /></Svg>
        </TabNav>
        <AddTab type="button" aria-label="Add sheet">
            <Svg w={20} h={21}>
                <path d="M1.500 1.500h10l4 4v14h-14z" fill="#fff" stroke="#d5d3d1" />
                <circle cx="15" cy="9.500" r="3" fill="#2a6fb8" stroke="none" />
                <path d="M13 9.500h4M15 7.500v4" stroke="#fff" />
            </Svg>
        </AddTab>
        <Tab type="button" $kind="blue">Instrucciones</Tab>
        <Tab type="button" $kind="gray">Configuración</Tab>
        <Tab type="button" $kind="open">Ventas</Tab>
        <Tab type="button" $kind="amber">Resumen</Tab>
    </TabBar>
)

const railIcons = ['menu', 'properties', 'styles', 'gallery', 'navigator', 'fx']

const Status = () => (
    <StatusBar>
        <StatusItem $width={27}>
            <Svg size={14}><path d="M.500.500h13v13h-11l-2-2zM3.500.500v5h7v-5M3.500 13.500v-5h7v5M5.500 10v3" stroke="#8b8987" /></Svg>
        </StatusItem>
        <StatusItem $width={210}>Sheet 3 of 4</StatusItem>
        <StatusItem $width={290}>Selected: 1 row, 17 columns</StatusItem>
        <StatusItem $width={278}>PageStyle_Ventas</StatusItem>
        <StatusItem $grow={1} $center>English (USA)</StatusItem>
        <StatusItem $width={63} />
        <StatusItem $width={37}>
            <Svg w={25} h={16}>
                <path d="M-2.500 4.500h15v8h-15z" fill="#fff" stroke={BLUE} />
                <path d="M17 1.500h5M17 14.500h5M19.500 1.500v13" />
            </Svg>
        </StatusItem>
        <StatusItem $width={27} />
        <StatusItem $width={27} />
        <StatusItem $width={243} $center>Average: ; Sum: 0</StatusItem>
        <StatusItem $width={128}>
            <ZoomButton type="button" aria-label="Zoom out"><Svg size={9}><path d="M0 4.500h9" strokeWidth="2" /></Svg></ZoomButton>
            <ZoomSlider type="range" aria-label="Zoom" min="0" max="100" defaultValue="27" />
            <ZoomButton type="button" aria-label="Zoom in"><Svg size={9}><path d="M0 4.500h9M4.500 0v9" strokeWidth="2" /></Svg></ZoomButton>
        </StatusItem>
        <StatusItem $width={44}>65%</StatusItem>
    </StatusBar>
)

const App = () => (
    <Window>
        <GlobalStyle />
        <MenuBar>
            <div>{menus.map(name => <MenuItem key={name} type="button">{name}</MenuItem>)}</div>
            <CloseButton type="button" aria-label="Close">
                <Svg size={12}><path d="M3 2l7 7M10 2l-7 7" stroke="#333" strokeWidth="2" /></Svg>
            </CloseButton>
        </MenuBar>
        <Toolbar $indent={3}>{renderTools(standardTools)}</Toolbar>
        <Toolbar $indent={4}>
            <Combo $width={183} $gap={8}>
                <Select aria-label="Font name" $italic><option>Calibri</option></Select>
                <ComboArrow />
            </Combo>
            <Combo $width={89}>
                <Select aria-label="Font size"><option>17 pt</option></Select>
                <ComboArrow />
            </Combo>
            <Separator />
            {renderTools(formatTools)}
        </Toolbar>
        <Body>
            <Main>
                <FormulaBar>
                    <Combo $width={143}>
                        <Select aria-label="Name box"><option>A1:Q1</option></Select>
                        <ComboArrow />
                    </Combo>
                    <Separator $wide />
                    <FormulaButton type="button" aria-label="Function wizard"><Svg>{icons.fx}</Svg></FormulaButton>
                    <FormulaButton type="button" aria-label="Select function" $width={31}>
                        <Svg>{icons.sum}</Svg>
                        <Caret />
                    </FormulaButton>
                    <FormulaButton type="button" aria-label="Formula"><Svg>{icons.equals}</Svg></FormulaButton>
                    <FormulaInput aria-label="Input line" defaultValue="REGISTRO DIARIO DE VENTAS" />
                    <ExpandButton type="button" aria-label="Expand formula bar" />
                </FormulaBar>
                <GridArea>
                    <GridView><SalesSheet /></GridView>
                    <VScroll><VThumb /></VScroll>
                </GridArea>
                <HScroll><HThumb /><SplitMark /></HScroll>
                <SheetTabs />
            </Main>
            <Rail>
                <RailHandle type="button" aria-label="Hide sidebar" />
                <RailButtons>
                    {railIcons.map(name => (
                        <RailButton key={name} type="button" aria-label={name}><Svg>{icons[name]}</Svg></RailButton>
                    ))}
                </RailButtons>
            </Rail>
        </Body>
        <Status />
    </Window>
)

export default App
